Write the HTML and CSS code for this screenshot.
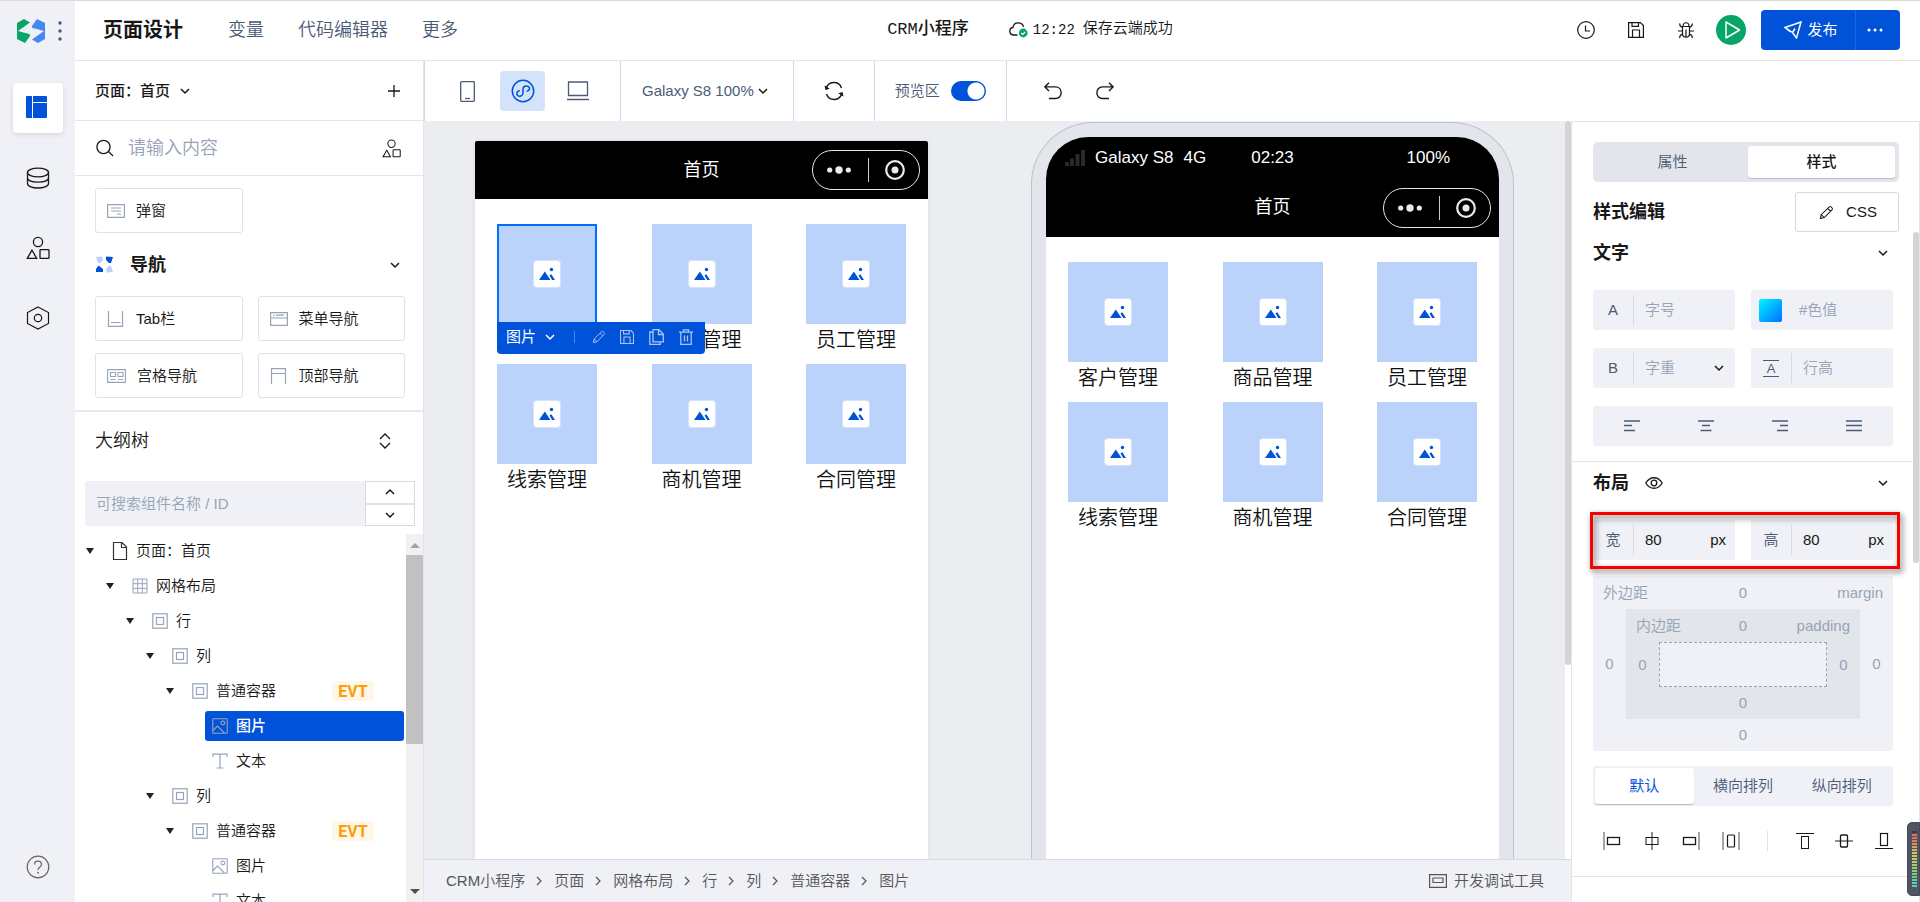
FILE: index.html
```html
<!DOCTYPE html>
<html lang="zh-CN">
<head>
<meta charset="utf-8">
<title>页面设计 - CRM小程序</title>
<link rel="stylesheet" href="styles.css">
</head>
<body>
<svg class="sprite" aria-hidden="true">
  <symbol id="chevron-down" viewBox="0 0 10 10"><path d="M1 3l4 4 4-4" fill="none" stroke="currentColor" stroke-width="1.5"/></symbol>
  <symbol id="chevron-up" viewBox="0 0 10 10"><path d="M1 7l4-4 4 4" fill="none" stroke="currentColor" stroke-width="1.5"/></symbol>
  <symbol id="chevron-right" viewBox="0 0 10 10"><path d="M3 1l4 4-4 4" fill="none" stroke="currentColor" stroke-width="1.2"/></symbol>
  <symbol id="shapes" viewBox="0 0 24 24"><g fill="none" stroke="currentColor" stroke-width="1.3"><circle cx="12" cy="6" r="4.6"/><path d="M6 14.2L1.300 22.300H10.700Z"/><rect x="14" y="13.600" width="9" height="8.800" rx=".6"/></g></symbol>
  <symbol id="pencil" viewBox="0 0 16 16"><path d="M1.500 14.500l.9-4.200 8.600-8.300q.9-.8 1.800 0l1.200 1.200q.8.900 0 1.800l-8.400 8.400zM9.300 3.700l3 3M2.500 10.400l3 3" fill="none" stroke="currentColor" stroke-width="1.100"/></symbol>
  <symbol id="floppy" viewBox="0 0 16 16"><path d="M.6.600h11.800l3 3v11.800H.6zM4.500 15.400V8h7v7.400M4 .6v3.800h6.500V.6" fill="none" stroke="currentColor" stroke-width="1.200"/></symbol>
  <symbol id="image" viewBox="0 0 16 16"><g fill="none" stroke="currentColor" stroke-width="1.100"><rect x=".8" y=".8" width="14.400" height="14.400" rx=".5"/><circle cx="10.800" cy="5" r="1.900"/><path d="M1 12.500L5.500 8l7 7"/></g></symbol>
  <symbol id="text" viewBox="0 0 16 16"><path d="M1 4V1.200h14V4M8 1.200v13.600M4.500 15h7" fill="none" stroke="currentColor" stroke-width="1.200"/></symbol>
  <symbol id="container" viewBox="0 0 16 16"><g fill="none" stroke="currentColor" stroke-width="1.200"><rect x=".8" y=".8" width="14.400" height="14.400"/><rect x="4.500" y="4.500" width="7" height="7"/></g></symbol>
  <symbol id="grid" viewBox="0 0 16 16"><path d="M1 1h14v14H1zM5.700 1v14M10.300 1v14M1 5.700h14M1 10.300h14" fill="none" stroke="currentColor"/></symbol>
  <symbol id="page" viewBox="0 0 16 20"><path d="M1.500 1.500h8.500l4.500 4.500v12.500h-13zM9.500 1.500v5h5" fill="none" stroke="currentColor" stroke-width="1.200"/></symbol>
  <symbol id="picture" viewBox="0 0 26 26"><path d="M5 19l5.800-8.500L16.500 19zM15.500 14.500l1.800-1.200L21 19h-2.800z" fill="#0052d9"/><circle cx="17.500" cy="8.500" r="1.700" fill="#0052d9"/></symbol>
  <symbol id="capsule-dots" viewBox="0 0 24 8"><g fill="#ebebeb"><circle cx="2.700" cy="4" r="2.600"/><circle cx="12" cy="4" r="3.700"/><circle cx="21.300" cy="4" r="2.600"/></g></symbol>
  <symbol id="capsule-target" viewBox="0 0 20 20"><circle cx="10" cy="10" r="8.800" fill="none" stroke="#ebebeb" stroke-width="2.200"/><circle cx="10" cy="10" r="3.500" fill="#ebebeb"/></symbol>
</svg>

<div class="app">
  <nav class="rail" aria-label="主导航">
    <div class="rail-brand">
      <svg width="28" height="24" viewBox="0 0 28 24" aria-hidden="true"><path d="M0 4L7 0l6 3.500L1 12l9 2.500q4 .5 3 2.500l-5 7-8-4z" fill="#07a568"/><path d="M28 20l-7 4-6-3.500L27 12l-9-2.500q-4-.5-3-2.500l5-7 8 4z" fill="#4787f0"/></svg>
      <button class="icon-btn brand-more" aria-label="更多应用"><svg width="4" height="20" viewBox="0 0 4 20"><g fill="#44567a"><circle cx="2" cy="2" r="1.700"/><circle cx="2" cy="10" r="1.700"/><circle cx="2" cy="18" r="1.700"/></g></svg></button>
    </div>
    <button class="rail-btn rail-active" aria-label="页面设计"><svg width="22" height="22" viewBox="0 0 22 22"><rect width="21" height="22" rx="1" fill="#0052d9"/><path d="M6.500 0v22M7 6.500h14" stroke="#fff"/></svg></button>
    <button class="rail-btn" aria-label="数据源"><svg width="24" height="22" viewBox="0 0 24 22"><g fill="none" stroke="currentColor" stroke-width="1.300"><ellipse cx="12" cy="5.500" rx="10.500" ry="4.300"/><path d="M1.500 5.500v11c0 6 21 6 21 0v-11M1.500 11c0 5.500 21 5.500 21 0"/></g></svg></button>
    <button class="rail-btn" aria-label="组件"><svg width="24" height="24"><use href="#shapes"/></svg></button>
    <button class="rail-btn" aria-label="设置"><svg width="24" height="24" viewBox="0 0 24 24"><g fill="none" stroke="currentColor" stroke-width="1.200"><path d="M12 1l10.500 5.500v11L12 23 1.500 17.500v-11z"/><circle cx="12" cy="12" r="3.700"/></g></svg></button>
    <button class="rail-btn rail-help" aria-label="帮助"><svg width="24" height="24" viewBox="0 0 24 24"><g fill="none" stroke="currentColor" stroke-width="1.200"><circle cx="12" cy="12" r="10.800"/><path d="M8.500 9.500c0-4.500 7-4.500 7 0 0 2.500-3.500 2.500-3.500 5.500"/></g><circle cx="12" cy="17.700" r=".9" fill="currentColor"/></svg></button>
  </nav>

  <div class="workspace">
    <header class="topbar">
      <h1 class="topbar-title">页面设计</h1>
      <nav class="topbar-menu">
        <a href="#">变量</a><a href="#">代码编辑器</a><a href="#">更多</a>
      </nav>
      <div class="topbar-status">
        <strong class="app-name">CRM小程序</strong>
        <svg width="20" height="16" viewBox="0 0 20 16" aria-hidden="true"><path d="M8.500 13H5C-.5 13-.3 5.800 4 5.500 5-.8 13.500-.3 14.500 5" fill="none" stroke="#181818" stroke-width="1.300"/><circle cx="14.200" cy="11" r="4.400" fill="#07a568"/><path d="M12.200 11l1.500 1.500 2.600-2.700" fill="none" stroke="#fff" stroke-width="1.200"/></svg>
        <time class="save-time">12:22</time>
        <span class="save-text">保存云端成功</span>
      </div>
      <div class="topbar-actions">
        <button class="icon-btn" aria-label="历史"><svg width="20" height="20" viewBox="0 0 20 20"><g fill="none" stroke="currentColor" stroke-width="1.200"><circle cx="10" cy="10" r="8.300"/><path d="M9.500 5.500V11H14"/></g></svg></button>
        <button class="icon-btn" aria-label="保存"><svg width="16" height="16"><use href="#floppy"/></svg></button>
        <button class="icon-btn" aria-label="调试"><svg width="18" height="18" viewBox="0 0 18 18"><path d="M5.500 5.500h7v7c0 5-7 5-7 0zM6 5.500c0-5 6-5 6 0M9 8.500V16M2.500 2.500l.8 2.500 2.200 1.500M15.500 2.500l-.8 2.500-2.200 1.500M1 10h4.500M17 10h-4.500M2.500 17l.8-2.500 2.200-1.500M15.500 17l-.8-2.500-2.200-1.500" fill="none" stroke="currentColor" stroke-width="1.200"/></svg></button>
        <button class="play-btn" aria-label="预览"><svg width="16" height="18" viewBox="0 0 16 18"><path d="M1 1v16l13.500-8z" fill="none" stroke="#fff" stroke-width="1.500" stroke-linejoin="round"/></svg></button>
        <div class="publish">
          <button class="publish-main"><svg width="18" height="18" viewBox="0 0 18 18" aria-hidden="true"><path d="M1 6.500L17 1l-4.500 16-4-5.500zM8.500 11.500l2.500-4M1 6.500l5.500 4.500" fill="none" stroke="#fff" stroke-width="1.500"/></svg>发布</button>
          <button class="publish-more" aria-label="更多发布选项"><svg width="16" height="4" viewBox="0 0 16 4"><g fill="#fff"><circle cx="2" cy="2" r="1.500"/><circle cx="8" cy="2" r="1.500"/><circle cx="14" cy="2" r="1.500"/></g></svg></button>
        </div>
      </div>
    </header>

    <div class="main">
      <aside class="side">
        <div class="page-row">
          <button class="page-picker">页面：首页 <svg width="10" height="10"><use href="#chevron-down"/></svg></button>
          <button class="icon-btn" aria-label="新建页面"><svg width="12" height="12" viewBox="0 0 12 12"><path d="M6 0v12M0 6h12" stroke="currentColor" stroke-width="1.300"/></svg></button>
        </div>
        <div class="search-row">
          <svg width="18" height="18" viewBox="0 0 18 18" aria-hidden="true"><circle cx="7.500" cy="8" r="6.600" fill="none" stroke="currentColor" stroke-width="1.300"/><path d="M12.500 12.500l4.500 4.500" stroke="currentColor" stroke-width="1.300"/></svg>
          <input class="search-input" type="text" placeholder="请输入内容" aria-label="搜索组件">
          <button class="icon-btn" aria-label="组件库"><svg width="19" height="19"><use href="#shapes"/></svg></button>
        </div>
        <div class="palette">
          <div class="cards">
            <button class="card"><svg width="18" height="14" viewBox="0 0 18 14"><path d="M.6.600h16.800v12.800H.6zM4 4h10M4 7h10M10 10h4" fill="none" stroke="currentColor" stroke-width="1.200"/></svg>弹窗</button>
          </div>
          <h2 class="palette-head">
            <svg width="17" height="17" viewBox="0 0 17 17" aria-hidden="true"><path d="M0 1l6-.5L7 4 4 7H2zM10 13l3-3h2l2 6-6 .5z" fill="#b8d0fb"/><path d="M17 1l-7-.5V4l3 3h2zM0 16v-3l2.500-3.500L7 13v3z" fill="#0052d9"/></svg>
            <span>导航</span>
            <svg class="push" width="10" height="10" aria-hidden="true"><use href="#chevron-down"/></svg>
          </h2>
          <div class="cards">
            <button class="card"><svg width="18" height="16" viewBox="0 0 18 16"><path d="M1.500 0v15.300h14V0M4 11.500h9.500" fill="none" stroke="currentColor" stroke-width="1.200"/></svg>Tab栏</button>
            <button class="card"><svg width="18" height="14" viewBox="0 0 18 14"><path d="M.6.600h16.800v12.800H.6zM.6 6h16.800M3 3.200h1.500M6 3.200h8" fill="none" stroke="currentColor" stroke-width="1.200"/></svg>菜单导航</button>
            <button class="card"><svg width="19" height="14" viewBox="0 0 19 14"><path d="M.6.600h17.800v12.800H.6zM3.500 3.500h5v4h-5zM11 3.500h5v4h-5zM3.500 10.500h5M11 10.500h5" fill="none" stroke="currentColor" stroke-width="1.100"/></svg>宫格导航</button>
            <button class="card"><svg width="18" height="16" viewBox="0 0 18 16"><path d="M1.500 16V.7h14V16M1.500 5.500h14" fill="none" stroke="currentColor" stroke-width="1.200"/></svg>顶部导航</button>
            <button class="card" aria-label="更多组件"></button>
            <button class="card" aria-label="更多组件"></button>
          </div>
        </div>
        <section class="outline">
          <div class="outline-head">
            <h2 class="outline-title">大纲树</h2>
            <button class="icon-btn" aria-label="折叠"><svg width="12" height="16" viewBox="0 0 12 16"><path d="M1 6l5-5 5 5M1 10l5 5 5-5" fill="none" stroke="currentColor" stroke-width="1.300"/></svg></button>
          </div>
          <div class="outline-search">
            <input class="outline-input" type="text" placeholder="可搜索组件名称 / ID" aria-label="搜索大纲">
            <div class="stepper">
              <button aria-label="上一个"><svg width="10" height="10"><use href="#chevron-up"/></svg></button>
              <button aria-label="下一个"><svg width="10" height="10"><use href="#chevron-down"/></svg></button>
            </div>
          </div>
          <div class="tree-wrap">
            <ul class="tree">
              <li class="node lv0"><i class="caret"></i><svg class="dark" width="16" height="20"><use href="#page"/></svg>页面：首页</li>
              <li class="node lv1"><i class="caret"></i><svg width="16" height="16"><use href="#grid"/></svg>网格布局</li>
              <li class="node lv2"><i class="caret"></i><svg width="16" height="16"><use href="#container"/></svg>行</li>
              <li class="node lv3"><i class="caret"></i><svg width="16" height="16"><use href="#container"/></svg>列</li>
              <li class="node lv4"><i class="caret"></i><svg width="16" height="16"><use href="#container"/></svg>普通容器<span class="evt">EVT</span></li>
              <li class="node lv5 selected"><span class="node-fill"><svg width="16" height="16"><use href="#image"/></svg>图片</span></li>
              <li class="node lv5"><span class="node-fill"><svg width="16" height="16"><use href="#text"/></svg>文本</span></li>
              <li class="node lv3"><i class="caret"></i><svg width="16" height="16"><use href="#container"/></svg>列</li>
              <li class="node lv4"><i class="caret"></i><svg width="16" height="16"><use href="#container"/></svg>普通容器<span class="evt">EVT</span></li>
              <li class="node lv5"><span class="node-fill"><svg width="16" height="16"><use href="#image"/></svg>图片</span></li>
              <li class="node lv5"><span class="node-fill"><svg width="16" height="16"><use href="#text"/></svg>文本</span></li>
            </ul>
            <div class="tree-scroll" aria-hidden="true"><i class="arrow-up"></i><i class="tree-thumb"></i><i class="arrow-down"></i></div>
          </div>
        </section>
      </aside>

      <div class="center">
        <div class="toolbar">
          <div class="tool-group devices">
            <button class="device" aria-label="手机"><svg width="15" height="21" viewBox="0 0 15 21"><rect x=".7" y=".7" width="13.600" height="19.600" rx=".8" fill="none" stroke="currentColor" stroke-width="1.300"/><path d="M5 17.500h5" stroke="currentColor" stroke-width="1.300"/></svg></button>
            <button class="device device-on" aria-label="小程序"><svg width="24" height="24" viewBox="0 0 24 24"><g fill="none" stroke="currentColor" stroke-width="1.500"><circle cx="12" cy="12" r="10.700"/><path d="M8.800 11.500c-5 1-3 7 1 5.500 1.500-.5 2.200-1.500 2.200-3V10c0-4 6.500-4 6.500-.5 0 1.700-1.300 2.500-2.800 2.700"/></g></svg></button>
            <button class="device" aria-label="电脑"><svg width="22" height="20" viewBox="0 0 22 20"><path d="M1.500 1h19v13.500h-19zM0 18.500h22" fill="none" stroke="currentColor" stroke-width="1.300"/></svg></button>
          </div>
          <div class="tool-group"><button class="zoom-btn">Galaxy S8 100% <svg width="10" height="10"><use href="#chevron-down"/></svg></button></div>
          <div class="tool-group"><button class="icon-btn" aria-label="刷新"><svg width="20" height="20" viewBox="0 0 20 20"><path d="M2 8C4-.5 15-.5 17.500 7M18 12c-2 8.500-13 8.500-15.500 1" fill="none" stroke="currentColor" stroke-width="1.400"/><path d="M.5 4.500L1.500 9l4.300-1.200zM19.500 15.500l-1-4.500-4.300 1.200z" fill="currentColor"/></svg></button></div>
          <div class="tool-group"><label class="switch-label">预览区<input class="switch" type="checkbox" checked></label></div>
          <div class="tool-group history">
            <button class="icon-btn" aria-label="撤销"><svg width="18" height="18" viewBox="0 0 18 18"><path d="M5 .8L.9 4.900 5 9M1 4.900h10.500c7.500 0 7.500 11.600 0 11.600H5" fill="none" stroke="currentColor" stroke-width="1.400"/></svg></button>
            <button class="icon-btn" aria-label="重做"><svg width="18" height="18" viewBox="0 0 18 18"><path d="M13 .8l4.100 4.100L13 9M17 4.900H6.500c-7.500 0-7.500 11.600 0 11.600H13" fill="none" stroke="currentColor" stroke-width="1.400"/></svg></button>
          </div>
        </div>

        <div class="content">
          <div class="stage">
            <div class="canvas">
              <div class="editor-phone">
                <div class="nav-bar"><span>首页</span><div class="capsule"><svg width="24" height="8"><use href="#capsule-dots"/></svg><i></i><svg width="20" height="20"><use href="#capsule-target"/></svg></div></div>
                <div class="tiles">
                  <div class="tile"><div class="pic pic-selected"><svg width="26" height="26"><use href="#picture"/></svg></div><p>客户管理</p>
                    <div class="float-bar">
                      <button class="float-name">图片 <svg width="10" height="10"><use href="#chevron-down"/></svg></button>
                      <i></i>
                      <button aria-label="编辑"><svg width="14" height="14"><use href="#pencil"/></svg></button>
                      <button aria-label="保存"><svg width="14" height="14"><use href="#floppy"/></svg></button>
                      <button aria-label="复制"><svg width="15" height="16" viewBox="0 0 15 16"><path d="M4 .7h6l4.300 4.300v7.800H4zM9.500.700v4.800h4.500M4 3H.8v12.300h10.500v-2.500" fill="none" stroke="currentColor" stroke-width="1.300"/></svg></button>
                      <button aria-label="删除"><svg width="14" height="16" viewBox="0 0 14 16"><path d="M0 3.200h14M4.500 3V.8h5V3M1.800 3.500v11.800h10.400V3.500M5.500 6.500v6M8.500 6.500v6" fill="none" stroke="currentColor" stroke-width="1.300"/></svg></button>
                    </div>
                  </div>
                  <div class="tile"><div class="pic"><svg width="26" height="26"><use href="#picture"/></svg></div><p>商品管理</p></div>
                  <div class="tile"><div class="pic"><svg width="26" height="26"><use href="#picture"/></svg></div><p>员工管理</p></div>
                  <div class="tile"><div class="pic"><svg width="26" height="26"><use href="#picture"/></svg></div><p>线索管理</p></div>
                  <div class="tile"><div class="pic"><svg width="26" height="26"><use href="#picture"/></svg></div><p>商机管理</p></div>
                  <div class="tile"><div class="pic"><svg width="26" height="26"><use href="#picture"/></svg></div><p>合同管理</p></div>
                </div>
              </div>

              <div class="preview-frame">
                <div class="preview-screen">
                  <div class="status-bar">
                    <span class="carrier"><svg width="20" height="16" viewBox="0 0 20 16" aria-hidden="true"><path d="M0 12h4v4H0zM5 8.500h4V16H5zM10.500 4h4v12h-4zM16 0h4v16h-4z" fill="#2a2a2a"/></svg>Galaxy S8<span>4G</span></span>
                    <span>02:23</span>
                    <span class="battery">100%</span>
                  </div>
                  <div class="nav-bar nav-preview"><span>首页</span><div class="capsule"><svg width="24" height="8"><use href="#capsule-dots"/></svg><i></i><svg width="20" height="20"><use href="#capsule-target"/></svg></div></div>
                  <div class="tiles">
                    <div class="tile"><div class="pic"><svg width="26" height="26"><use href="#picture"/></svg></div><p>客户管理</p></div>
                    <div class="tile"><div class="pic"><svg width="26" height="26"><use href="#picture"/></svg></div><p>商品管理</p></div>
                    <div class="tile"><div class="pic"><svg width="26" height="26"><use href="#picture"/></svg></div><p>员工管理</p></div>
                    <div class="tile"><div class="pic"><svg width="26" height="26"><use href="#picture"/></svg></div><p>线索管理</p></div>
                    <div class="tile"><div class="pic"><svg width="26" height="26"><use href="#picture"/></svg></div><p>商机管理</p></div>
                    <div class="tile"><div class="pic"><svg width="26" height="26"><use href="#picture"/></svg></div><p>合同管理</p></div>
                  </div>
                </div>
              </div>
              <div class="canvas-scroll" aria-hidden="true"></div>
            </div>
            <footer class="crumbs">
              <a href="#">CRM小程序</a><svg width="10" height="10"><use href="#chevron-right"/></svg>
              <a href="#">页面</a><svg width="10" height="10"><use href="#chevron-right"/></svg>
              <a href="#">网格布局</a><svg width="10" height="10"><use href="#chevron-right"/></svg>
              <a href="#">行</a><svg width="10" height="10"><use href="#chevron-right"/></svg>
              <a href="#">列</a><svg width="10" height="10"><use href="#chevron-right"/></svg>
              <a href="#">普通容器</a><svg width="10" height="10"><use href="#chevron-right"/></svg>
              <a href="#">图片</a>
              <button class="devtools"><svg width="18" height="14" viewBox="0 0 18 14"><path d="M.6.600h16.800v12.800H.6zM4 4h10v4.500H4z" fill="none" stroke="currentColor" stroke-width="1.200"/></svg>开发调试工具</button>
            </footer>
          </div>

          <aside class="props">
            <div class="props-body">
              <section class="block">
                <div class="tabs" role="tablist"><button role="tab">属性</button><button role="tab" class="tab-on" aria-selected="true">样式</button></div>
                <div class="style-head"><h2>样式编辑</h2><button class="css-btn"><svg width="15" height="15"><use href="#pencil"/></svg>CSS</button></div>
                <h2 class="block-head">文字<svg class="push" width="10" height="10"><use href="#chevron-down"/></svg></h2>
                <div class="fields">
                  <div class="field"><label for="font-size">A</label><input id="font-size" type="text" placeholder="字号"></div>
                  <div class="field field-color"><label for="font-color"><i class="swatch"></i></label><input id="font-color" type="text" placeholder="#色值" aria-label="色值"></div>
                </div>
                <div class="fields">
                  <div class="field"><label for="font-weight">B</label><select id="font-weight"><option>字重</option></select><svg width="10" height="10"><use href="#chevron-down"/></svg></div>
                  <div class="field"><label for="line-height"><span class="over-under">A</span></label><input id="line-height" type="text" placeholder="行高"></div>
                </div>
                <div class="aligns">
                  <button aria-label="左对齐"><svg width="16" height="12" viewBox="0 0 16 12"><path d="M0 1h16M0 5.500h8M0 10.500h11" stroke="currentColor" stroke-width="1.300"/></svg></button>
                  <button aria-label="居中"><svg width="16" height="12" viewBox="0 0 16 12"><path d="M0 1h16M4 5.500h8M2.500 10.500h11" stroke="currentColor" stroke-width="1.300"/></svg></button>
                  <button aria-label="右对齐"><svg width="16" height="12" viewBox="0 0 16 12"><path d="M0 1h16M8 5.500h8M5 10.500h11" stroke="currentColor" stroke-width="1.300"/></svg></button>
                  <button aria-label="两端对齐"><svg width="16" height="12" viewBox="0 0 16 12"><path d="M0 1h16M0 5.500h16M0 10.500h16" stroke="currentColor" stroke-width="1.300"/></svg></button>
                </div>
              </section>
              <section class="block block-layout">
                <h2 class="block-head">布局<svg width="18" height="12" viewBox="0 0 18 12"><g fill="none" stroke="currentColor" stroke-width="1.300"><path d="M.8 6C5-1 13-1 17.200 6 13 13 5 13 .8 6z"/><circle cx="9" cy="6" r="2.800"/></g></svg><svg class="push" width="10" height="10"><use href="#chevron-down"/></svg></h2>
                <div class="fields fields-size">
                  <div class="field"><label for="w">宽</label><input id="w" type="text" value="80"><span class="unit">px</span></div>
                  <div class="field"><label for="h">高</label><input id="h" type="text" value="80"><span class="unit">px</span></div>
                  <div class="mark"></div>
                </div>
                <div class="box-model">
                  <div class="box-top"><span>外边距</span><input value="0" aria-label="上外边距"><span>margin</span></div>
                  <div class="box-mid">
                    <input value="0" aria-label="左外边距">
                    <div class="box-inner">
                      <div class="box-top"><span>内边距</span><input value="0" aria-label="上内边距"><span>padding</span></div>
                      <div class="box-mid"><input value="0" aria-label="左内边距"><div class="box-core"></div><input value="0" aria-label="右内边距"></div>
                      <div class="box-bottom"><input value="0" aria-label="下内边距"></div>
                    </div>
                    <input value="0" aria-label="右外边距">
                  </div>
                  <div class="box-bottom"><input value="0" aria-label="下外边距"></div>
                </div>
                <div class="modes"><button class="mode-on">默认</button><button>横向排列</button><button>纵向排列</button></div>
                <div class="dist">
                  <button aria-label="左"><svg width="18" height="18" viewBox="0 0 18 18"><path d="M1 0v18" stroke="#888" stroke-width="1.500"/><rect x="4.500" y="5.500" width="12" height="7" fill="none" stroke="currentColor" stroke-width="1.300"/></svg></button>
                  <button aria-label="水平居中"><svg width="18" height="18" viewBox="0 0 18 18"><path d="M9 0v18" stroke="currentColor"/><rect x="3" y="5.500" width="12" height="7" fill="none" stroke="currentColor"/></svg></button>
                  <button aria-label="右"><svg width="18" height="18" viewBox="0 0 18 18"><path d="M17 0v18" stroke="#888" stroke-width="1.500"/><rect x="1.500" y="5.500" width="12" height="7" fill="none" stroke="currentColor" stroke-width="1.300"/></svg></button>
                  <button aria-label="水平分布"><svg width="18" height="18" viewBox="0 0 18 18"><path d="M1 0v18M17 0v18" stroke="#888" stroke-width="1.500"/><rect x="5.500" y="3" width="7" height="12" rx="1" fill="none" stroke="currentColor" stroke-width="1.200"/></svg></button>
                  <i></i>
                  <button aria-label="顶部"><svg width="18" height="18" viewBox="0 0 18 18"><path d="M0 1.500h18" stroke="currentColor"/><rect x="5.500" y="4.500" width="7" height="12" fill="none" stroke="currentColor"/></svg></button>
                  <button aria-label="垂直居中"><svg width="18" height="18" viewBox="0 0 18 18"><path d="M0 9h18" stroke="currentColor"/><rect x="5.500" y="3" width="7" height="12" rx="1" fill="none" stroke="currentColor" stroke-width="1.300"/></svg></button>
                  <button aria-label="底部"><svg width="18" height="18" viewBox="0 0 18 18"><path d="M0 16.500h18" stroke="currentColor"/><rect x="5.500" y="1.500" width="7" height="12" fill="none" stroke="currentColor" stroke-width="1.200"/></svg></button>
                </div>
              </section>
            </div>
            <div class="props-scroll" aria-hidden="true"></div>
          </aside>
        </div>
      </div>
    </div>
  </div>
  <div class="meter" aria-hidden="true"><i></i></div>
</div>
</body>
</html>
```
FILE: styles.css
```css
* { box-sizing: border-box; }
html { height: 100%; }
body {
  margin: 0; height: 100%; overflow: hidden;
  font: 350 15px/20px "Liberation Sans", "Noto Sans CJK SC", sans-serif;
  color: #181818; background: #fff;
}
h1, h2, p, ul { margin: 0; padding: 0; }
i { display: block; flex: none; }
svg { flex: none; display: block; }
button {
  font: inherit; color: inherit; background: none; border: 0; padding: 0; cursor: pointer;
  display: flex; align-items: center; justify-content: center;
}
input, select { font: inherit; color: inherit; border: 0; background: none; padding: 0; min-width: 0; outline: 0; }
input::placeholder { color: #97a3b7; opacity: 1; }
a { color: inherit; text-decoration: none; }
.sprite { position: absolute; width: 0; height: 0; }
.push { margin-left: auto; }
.icon-btn { min-width: 20px; min-height: 20px; }

.app { display: flex; height: 100vh; border-top: 1px solid #d9d9d9; }

/* rail */
.rail { width: 75px; flex: none; background: #eff1f6; display: flex; flex-direction: column; align-items: center; padding: 17px 0 10px; }
.rail-brand { display: flex; align-items: center; gap: 13px; align-self: stretch; padding-left: 17px; height: 26px; margin-bottom: 39px; }
.rail-brand .brand-more { min-width: 4px; }
.rail-btn { width: 50px; height: 50px; margin-bottom: 20px; border-radius: 4px; flex: none; }
.rail-active { background: #fff; box-shadow: 0 2px 5px rgba(0, 0, 0, .1); padding: 0 2px 2px 0; }
.rail-help { margin: auto 0 0; color: #666; }

.workspace { flex: 1; min-width: 0; display: flex; flex-direction: column; }

/* top bar */
.topbar { height: 60px; flex: none; border-bottom: 1px solid #e2e6eb; display: flex; align-items: center; padding: 0 20px 2px 28px; }
.topbar-title { font-size: 20px; line-height: 28px; }
.topbar-menu { display: flex; gap: 34px; margin-left: 45px; font-size: 18px; color: #4b5b76; }
.topbar-status { display: flex; align-items: center; margin: 0 auto; padding-left: 26px; font-family: "Liberation Mono", "Noto Sans CJK SC", monospace; }
.app-name { font-size: 17px; font-weight: 500; margin-right: 40px; }
.save-time { font-size: 14px; margin: 0 8px 0 4px; }
.topbar-actions { display: flex; align-items: center; gap: 30px; }
.play-btn { width: 30px; height: 30px; border-radius: 50%; background: #07a568; padding-left: 4px; margin-left: -10px; }
.publish { display: flex; height: 40px; border-radius: 4px; overflow: hidden; background: #0052d9; color: #fff; margin-left: -15px; }
.publish-main { width: 94px; gap: 5px; padding-left: 6px; font-weight: 400; }
.publish-more { width: 45px; border-left: 1px solid #1f68de; padding-right: 6px; }

.main { flex: 1; min-height: 0; display: flex; }

/* side */
.side { width: 349px; flex: none; display: flex; flex-direction: column; border-right: 1px solid #e2e6eb; }
.page-row { height: 60px; flex: none; display: flex; align-items: center; justify-content: space-between; padding: 0 19px 0 20px; border-bottom: 1px solid #e2e6eb; }
.page-picker { gap: 10px; font-weight: 500; }
.search-row { height: 55px; flex: none; display: flex; align-items: center; padding: 0 22px 0 21px; border-bottom: 1px solid #e2e6eb; }
.search-input { flex: 1; font-size: 18px; margin-left: 14px; }
.palette { height: 236px; flex: none; overflow: hidden; padding: 12px 18px 0 20px; border-bottom: 2px solid #e6e8ec; }
.cards { display: grid; grid-template-columns: 1fr 1fr; gap: 12px 15px; }
.card { height: 45px; border: 1px solid #dfe2e8; border-radius: 3px; justify-content: flex-start; padding-left: 11px; gap: 11px; }
.card svg { color: #97a3b7; }
.palette-head { height: 63px; display: flex; align-items: center; gap: 17px; font-size: 18px; padding: 0 5px 0 1px; }
.outline { flex: 1; min-height: 0; display: flex; flex-direction: column; }
.outline-head { height: 58px; flex: none; display: flex; align-items: center; justify-content: space-between; padding: 0 28px 0 20px; }
.outline-title { font-size: 18px; font-weight: 350; }
.outline-search { display: flex; height: 45px; flex: none; margin: 11px 8px 8px 10px; }
.outline-input { flex: 1; background: #eff1f6; border-radius: 3px 0 0 3px; padding-left: 11px; }
.stepper { width: 50px; display: flex; flex-direction: column; border: 1px solid #d9d9d9; }
.stepper button { flex: 1; }
.stepper button + button { border-top: 2px solid #e2e2e2; }
.tree-wrap { flex: 1; min-height: 0; display: flex; overflow: hidden; }
.tree { flex: 1; list-style: none; min-width: 0; }
.node { height: 35px; display: flex; align-items: center; padding: 0 2px 2px 0; }
.node svg { color: #97a3b7; margin: 0 8px 0 18px; }
.node svg.dark { color: #333; }
.node-fill { flex: 1; height: 30px; display: flex; align-items: center; border-radius: 3px; }
.node .node-fill svg { margin-left: 7px; }
.selected .node-fill { background: #0052d9; color: #fff; font-weight: 500; }
.node.lv0 { padding-left: 11px; }
.node.lv1 { padding-left: 31px; }
.node.lv2 { padding-left: 51px; }
.node.lv3 { padding-left: 71px; }
.node.lv4 { padding-left: 91px; }
.node.lv5 { padding-left: 130px; }
.caret { border: 4px solid transparent; border-top: 6px solid #222; border-bottom: 0; }
.evt { margin: 0 30px 0 auto; width: 42px; height: 20px; border-radius: 4px; background: #fff6ea; color: #ff9d00; font: 700 16px/22px Roboto, sans-serif; text-align: center; }
.tree-scroll { width: 17px; background: #f1f1f1; display: flex; flex-direction: column; align-items: center; padding: 9px 0 8px; }
.tree-thumb { width: 17px; height: 189px; background: #c1c1c1; margin-top: 7px; }
.arrow-up { border: 5px solid transparent; border-top: 0; border-bottom-color: #a3a3a3; }
.arrow-down { border: 5px solid transparent; border-bottom: 0; border-top-color: #505050; margin-top: auto; }

/* toolbar */
.center { flex: 1; min-width: 0; display: flex; flex-direction: column; }
.toolbar { height: 60px; flex: none; display: flex; border-left: 1px solid #d5d9e0; }
.tool-group { display: flex; align-items: center; justify-content: center; padding: 0 20px; border-right: 1px solid #d5d9e0; color: #181818; }
.devices { gap: 10px; padding: 0 20px; }
.device { width: 45px; height: 40px; border-radius: 4px; color: #4b5b76; }
.device-on { background: #d4e3fc; color: #0052d9; }
.zoom-btn { gap: 4px; color: #4b5b76; padding: 0 5px 0 1px; }
.zoom-btn svg { color: #181818; }
.tool-group > .icon-btn { width: 40px; }
.switch-label { display: flex; align-items: center; gap: 11px; color: #4b5b76; }
.switch { appearance: none; margin: 0; width: 35px; height: 20px; border-radius: 10px; background: radial-gradient(circle at 25px 10px, #fff 8px, #0052d9 9px); }
.history { border: 0; gap: 12px; padding-left: 26px; }

.content { flex: 1; min-height: 0; display: flex; }
.stage { flex: 1; min-width: 0; display: flex; flex-direction: column; }
.canvas { position: relative; flex: 1; min-height: 0; overflow: hidden; display: flex; justify-content: space-between; padding: 0 57px 0 51px; background: linear-gradient(#fff, #fff) right / 6px 100% no-repeat #ebedf1; }
.canvas-scroll { position: absolute; right: 0; top: 0; width: 6px; height: 544px; border-radius: 3px; background: #d4d4d4; }

.editor-phone { width: 453px; margin-top: 20px; background: #fff; border-radius: 2px 2px 0 0; box-shadow: 0 0 4px rgba(0, 0, 0, .08); }
.nav-bar { position: relative; height: 58px; background: #000; color: #fff; border-radius: 2px 2px 0 0; display: flex; align-items: center; justify-content: center; font-size: 18px; font-weight: 400; }
.nav-preview { height: 60px; border-radius: 0; }
.capsule { position: absolute; right: 8px; top: 9px; width: 108px; height: 40px; border: 1px solid #e6e6e6; border-radius: 20px; display: flex; align-items: center; justify-content: space-between; padding: 0 14px; }
.capsule i { width: 1px; height: 24px; background: #ccc; }
.nav-preview .capsule { top: 11px; }
.tiles { display: grid; grid-template-columns: repeat(3, 100px); justify-content: space-between; gap: 8px 0; padding: 25px 22px; }
.tile { position: relative; }
.tile p { font-size: 20px; line-height: 32px; text-align: center; color: #111; }
.pic { height: 100px; background: #bbd3fb; display: flex; align-items: center; justify-content: center; }
.pic svg { background: #fff; border-radius: 2px; outline: 1px solid #d4e3fc; }
.pic-selected { border: 2px solid #006eff; }
.float-bar { position: absolute; left: 0; top: 98px; z-index: 1; width: 208px; height: 32px; background: #0052d9; border-radius: 0 0 4px 4px; display: flex; align-items: center; justify-content: space-between; padding: 0 12px 2px 9px; color: #a9c4f2; }
.float-bar i { width: 1px; height: 12px; background: #4a86e6; margin: 0 2px 0 4px; }
.float-name { color: #fff; gap: 9px; font-weight: 400; }

.preview-frame { width: 483px; margin-top: 1px; border: 1px solid #b8c2d1; border-bottom: 0; border-radius: 62px 62px 0 0; background: #e2e6eb; padding: 14px 14px 0; }
.preview-screen { height: 100%; background: #fff; border-radius: 42px 42px 0 0; overflow: hidden; }
.status-bar { height: 40px; background: #000; color: #fff; display: grid; grid-template-columns: 1fr auto 1fr; align-items: center; padding: 2px 19px 0; font-size: 17px; font-weight: 400; }
.carrier { display: flex; align-items: center; gap: 10px; }
.battery { text-align: right; padding-right: 30px; }

.crumbs { height: 43px; flex: none; background: #eff1f6; border-top: 1px solid #d5d9e0; display: flex; align-items: center; gap: 10px; padding: 0 27px 0 22px; color: #555; }
.crumbs svg { margin: 0 -1px; }
.crumbs a + svg { margin-right: 0; }
.devtools { margin-left: auto; gap: 8px; }

/* properties */
.props { position: relative; width: 349px; flex: none; border: 1px solid #e2e6eb; border-width: 1px 1px 0; overflow: hidden; background: #fff; }
.props-scroll { position: absolute; right: 0; top: 110px; width: 6px; height: 331px; border-radius: 3px; background: #d4d4d4; }
.block { padding: 20px 26px 15px 21px; border-bottom: 1px solid #e2e6eb; }
.block-layout { padding-top: 0; }
.tabs { display: flex; height: 40px; margin-right: -6px; padding: 4px; background: #e2e6eb; border-radius: 5px; color: #4b5b76; }
.tabs button { flex: 1; border-radius: 3px; }
.tabs .tab-on { flex: 0 0 147px; background: #fff; color: #181818; font-weight: 500; box-shadow: 0 1px 1px #b4bdca; }
.style-head { display: flex; align-items: center; justify-content: space-between; margin: 10px -6px 0 0; }
.style-head h2, .block-head { font-size: 18px; }
.css-btn { width: 104px; height: 40px; border: 1px solid #d5d9e0; border-radius: 3px; gap: 12px; padding-left: 2px; }
.block-head { height: 42px; display: flex; align-items: center; gap: 16px; padding-right: 5px; margin-bottom: 16px; }
.fields { position: relative; display: grid; grid-template-columns: 1fr 1fr; gap: 16px; margin-bottom: 18px; }
.field { height: 40px; display: flex; align-items: center; background: #eff1f6; border-radius: 3px; padding-right: 9px; }
.field label { width: 41px; height: 30px; flex: none; display: flex; align-items: center; justify-content: center; border-right: 1px solid #d5d9e0; color: #4b5b76; }
.field input, .field select { flex: 1; width: 0; margin-left: 11px; }
.field select { appearance: none; color: #97a3b7; }
.field > svg { margin-right: 2px; }
.field .swatch { width: 23px; height: 23px; border-radius: 2px; background: linear-gradient(135deg, #00f6ff, #0070ff); }
.field-color label { border: 0; width: 48px; justify-content: flex-start; padding-left: 8px; }
.field-color input { margin-left: 0; }
.over-under { border: 1px solid #4b5b76; border-width: 1px 0; width: 16px; line-height: 15px; font-size: 13px; text-align: center; }
.aligns { display: flex; height: 40px; background: #eff1f6; border-radius: 3px; color: #4b5b76; padding: 0 2px; }
.aligns button { flex: 1; }
.fields-size { margin-bottom: 16px; }
.mark { position: absolute; inset: -8px -7px -9px -3px; border: 3px solid #f70000; filter: drop-shadow(2px 3px 3px rgba(0, 0, 0, .6)); pointer-events: none; }
.box-model { background: #eff1f6; border-radius: 3px; color: #97a3b7; }
.box-model input { width: 100%; text-align: center; }
.box-top { display: grid; grid-template-columns: 1fr 20px 1fr; height: 33px; align-items: center; padding: 0 10px; }
.box-top span:last-child { text-align: right; }
.box-mid { display: grid; grid-template-columns: 33px 1fr 33px; align-items: center; }
.box-inner { background: #e2e6eb; }
.box-core { height: 45px; border: 1px dashed #97a3b7; background: #eff1f6; }
.box-bottom { height: 32px; display: flex; align-items: center; }
.modes { display: flex; height: 40px; margin: 15px 0; padding: 2px; background: #eff1f6; border-radius: 3px; color: #4b5b76; }
.modes button { flex: 1; border-radius: 3px; }
.modes .mode-on { background: #fff; color: #0052d9; font-weight: 400; box-shadow: 0 1px 1px #b4bdca; }
.dist { display: flex; align-items: center; justify-content: space-between; height: 40px; margin: 0 0 0 10px; }
.dist i { width: 1px; height: 20px; background: #dfe2e8; margin: 0 6px; }

/* floating level meter on the window edge */
.meter { position: fixed; right: 0; top: 822px; width: 13px; height: 74px; background: #505463; border: 1px solid #44485a; border-radius: 5px 0 0 5px; padding: 8px 2px 7px 4px; }
.meter i { height: 100%; background: repeating-linear-gradient(transparent 0 2px, #505463 2px 3px), linear-gradient(#3a3d48 0 5%, #e86a62 6% 14%, #d99a5a 24%, #d8c84e 40%, #a5d468 60%, #66d08a 80%, #4bd3c0); }
```
